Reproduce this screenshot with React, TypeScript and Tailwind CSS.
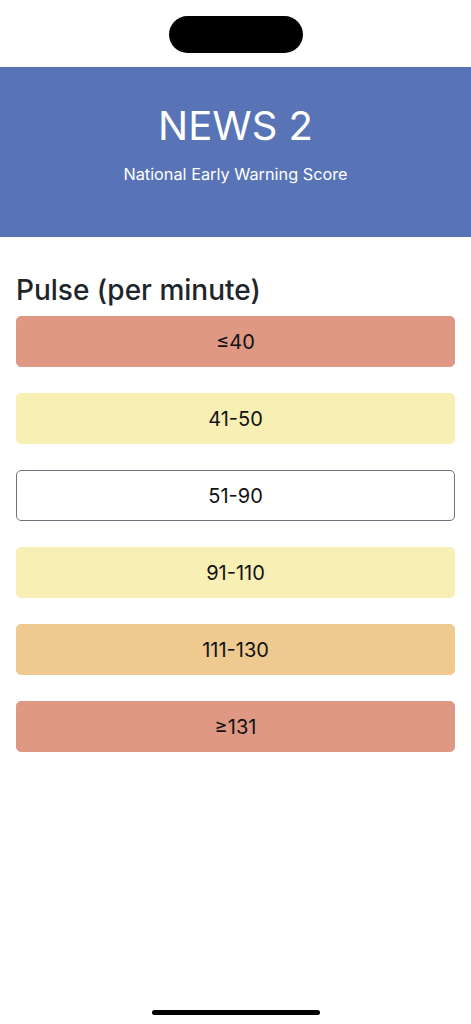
import React from "react";

const rows = [
  { label: "≤40", cls: "bg-[#de9884] border-[#de9884]" },
  { label: "41-50", cls: "bg-[#f8efb5] border-[#f8efb5]" },
  { label: "51-90", cls: "bg-white border-[#6c757d]" },
  { label: "91-110", cls: "bg-[#f8efb5] border-[#f8efb5]" },
  { label: "111-130", cls: "bg-[#eeca91] border-[#eeca91]" },
  { label: "≥131", cls: "bg-[#de9884] border-[#de9884]" },
];

export default function App() {
  return (
    <div
      className="relative w-[471px] h-[1024px] bg-white overflow-hidden"
      style={{ fontFamily: "Inter, 'Noto Sans', sans-serif" }}
    >
      <div className="h-[67px] flex justify-center pt-[16px]">
        <div className="w-[134px] h-[37px] rounded-full bg-black" />
      </div>
      <div className="h-[170px] bg-[#5874b6] flex flex-col items-center text-white">
        <h1 className="mt-[33px] text-[40px] leading-[52px] font-normal">NEWS 2</h1>
        <p className="mt-[10px] text-[16.3px] leading-[24px]">National Early Warning Score</p>
      </div>
      <div className="px-[16px] pt-[36px]">
        <h2 className="text-[28px] leading-[34px] text-[#212529] font-medium">Pulse (per minute)</h2>
        <div className="mt-[9px] flex flex-col gap-[26px]">
          {rows.map((r) => (
            <div
              key={r.label}
              className={`h-[51px] rounded-[5px] border flex items-center justify-center text-[20px] text-[#111] ${r.cls}`}
            >
              {r.label}
            </div>
          ))}
        </div>
      </div>
      <div className="absolute left-[152px] top-[1010px] w-[168px] h-[5px] rounded-full bg-black" />
    </div>
  );
}
